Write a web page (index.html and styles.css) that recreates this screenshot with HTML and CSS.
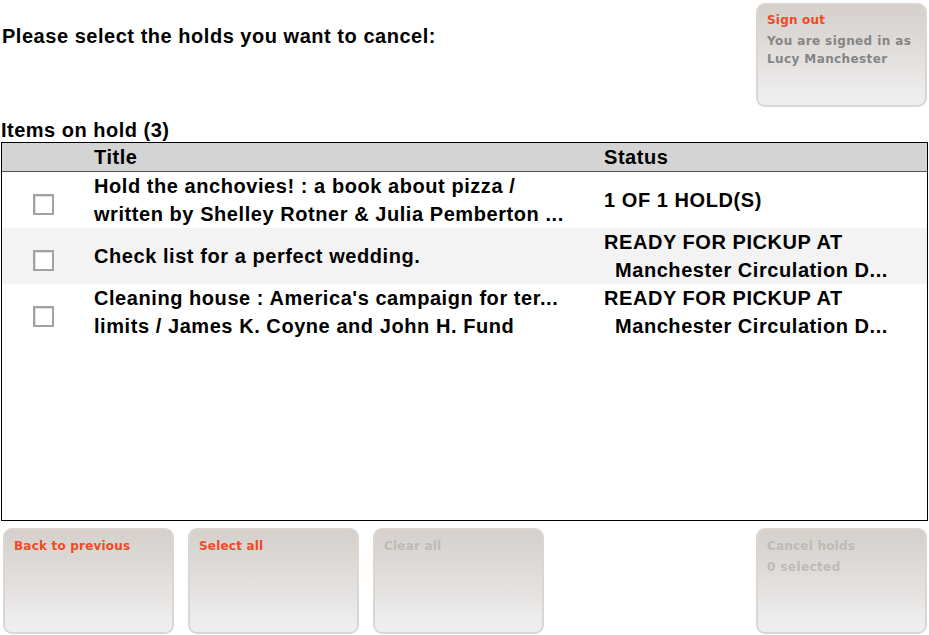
FILE: index.html
```html
<!DOCTYPE html>
<html>
<head>
<meta charset="utf-8">
<link rel="stylesheet" href="styles.css">
</head>
<body>
<div class="top">
  <h1 class="prompt">Please select the holds you want to cancel:</h1>
  <div class="btn signout">
    <div class="btn-label">Sign out</div>
    <div class="btn-sub">You are signed in as<br>Lucy Manchester</div>
  </div>
</div>
<div class="list-title">Items on hold (3)</div>
<div class="list">
  <table class="holds">
    <thead>
      <tr><th class="c-check"></th><th class="c-title">Title</th><th class="c-status">Status</th></tr>
    </thead>
    <tbody>
      <tr>
        <td class="c-check"><span class="checkbox"></span></td>
        <td class="c-title">Hold the anchovies! : a book about pizza /<br>written by Shelley Rotner &amp; Julia Pemberton ...</td>
        <td class="c-status">1 OF 1 HOLD(S)</td>
      </tr>
      <tr class="alt">
        <td class="c-check"><span class="checkbox"></span></td>
        <td class="c-title">Check list for a perfect wedding.</td>
        <td class="c-status">READY FOR PICKUP AT<span class="loc">Manchester Circulation D...</span></td>
      </tr>
      <tr>
        <td class="c-check"><span class="checkbox"></span></td>
        <td class="c-title">Cleaning house : America's campaign for ter...<br>limits / James K. Coyne and John H. Fund</td>
        <td class="c-status">READY FOR PICKUP AT<span class="loc">Manchester Circulation D...</span></td>
      </tr>
    </tbody>
  </table>
</div>
<div class="bottom">
  <div class="btn tall"><div class="btn-label">Back to previous</div></div>
  <div class="btn tall"><div class="btn-label">Select all</div></div>
  <div class="btn tall disabled"><div class="btn-label">Clear all</div></div>
  <div class="spacer"></div>
  <div class="btn tall disabled">
    <div class="btn-label">Cancel holds</div>
    <div class="btn-sub">0 selected</div>
  </div>
</div>
</body>
</html>
```

FILE: styles.css
```css
html, body {
  margin: 0;
  padding: 0;
  background: #ffffff;
}
body {
  width: 929px;
  height: 635px;
  overflow: hidden;
  font-family: "Liberation Sans", Arial, sans-serif;
  color: #000;
}
.top {
  display: flex;
  justify-content: space-between;
  align-items: flex-start;
  height: 113px;
  padding: 3px 2px 0 2px;
  box-sizing: border-box;
}
.prompt {
  margin: 0;
  padding-top: 21px;
  font-size: 20px;
  letter-spacing: 0.53px;
  font-weight: bold;
  line-height: 24px;
}
.btn {
  box-sizing: border-box;
  width: 171px;
  height: 104px;
  border: 2px solid #dbd6d2;
  border-radius: 9px;
  background: linear-gradient(to bottom, #d5d0cc 0%, #dcd8d5 30%, #e6e4e3 65%, #ececec 85%, #efefef 100%);
  padding: 6px 9px 7px;
  font-family: "DejaVu Sans", Verdana, sans-serif;
  font-weight: bold;
  font-size: 12px;
}
.btn.tall {
  height: 106px;
  padding-top: 7px;
}
.btn-label {
  color: #ee4b24;
  line-height: 18px;
  letter-spacing: 0.2px;
}
.btn-sub {
  color: #858585;
  line-height: 18px;
  margin-top: 3px;
  letter-spacing: 0.4px;
}
.btn.disabled .btn-label,
.btn.disabled .btn-sub {
  color: #bfbab6;
}
.list-title {
  padding-left: 1px;
  font-size: 20px;
  letter-spacing: 0.5px;
  font-weight: bold;
  line-height: 20px;
  height: 29px;
  padding-top: 7px;
  box-sizing: border-box;
}
.list {
  margin-left: 1px;
  width: 927px;
  height: 379px;
  box-sizing: border-box;
  border: 1px solid #000;
}
.holds {
  width: 100%;
  border-collapse: collapse;
  table-layout: fixed;
  font-size: 20px;
  letter-spacing: 0.56px;
  font-weight: bold;
}
.holds th {
  background: #d4d4d4;
  text-align: left;
  height: 27px;
  padding: 1px 0 0;
  border-bottom: 1px solid #555;
  line-height: 27px;
}
.holds td {
  height: 56px;
  padding: 0;
  line-height: 28px;
  vertical-align: middle;
  white-space: nowrap;
}
.holds tr.alt td {
  background: #f3f3f3;
}
.c-check { width: 92px; }
.c-title { width: 510px; }
.holds td.c-check { padding-left: 31px; box-sizing: border-box; }
.loc {
  display: block;
  padding-left: 11px;
}
.checkbox {
  display: block;
  width: 21px;
  height: 21px;
  box-sizing: border-box;
  border: 2px solid #a2a2a2;
  background: #fff;
  box-shadow: inset 1px 1px 0 #dedede;
  margin-top: 8px;
}
.bottom {
  display: flex;
  gap: 14px;
  padding: 7px 2px 0 3px;
}
.spacer { flex: 1; }
```
